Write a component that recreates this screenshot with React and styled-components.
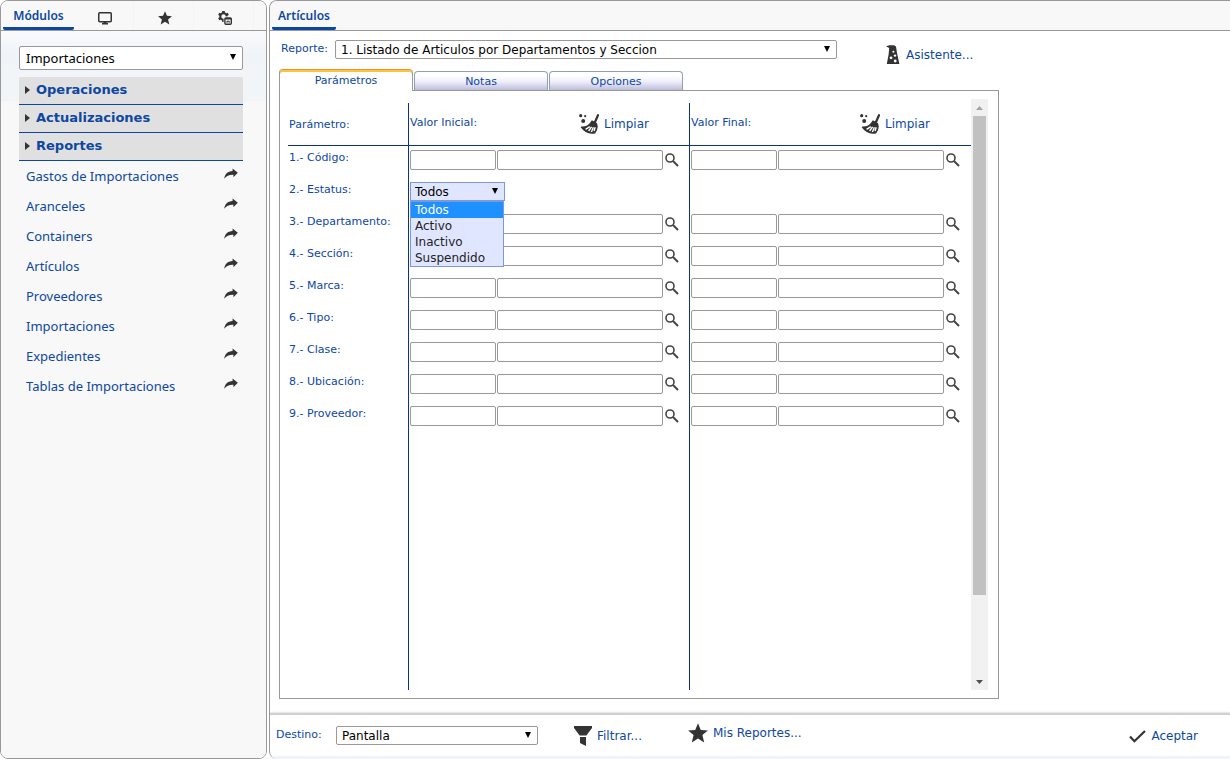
import React, {useState} from 'react'
import styled, {createGlobalStyle} from 'styled-components'

const blue = '#0d47a1'
const line = '#0a318c'
const grey = '#999999'
const verdana = '"DejaVu Sans", Verdana, sans-serif'
const lucida = '"Noto Sans", "Lucida Sans", sans-serif'

const modules = [
    'Gastos de Importaciones',
    'Aranceles',
    'Containers',
    'Artículos',
    'Proveedores',
    'Importaciones',
    'Expedientes',
    'Tablas de Importaciones',
]

const sections = ['Operaciones', 'Actualizaciones', 'Reportes']

const parameters = [
    'Código',
    'Estatus',
    'Departamento',
    'Sección',
    'Marca',
    'Tipo',
    'Clase',
    'Ubicación',
    'Proveedor',
]

const statuses = ['Todos', 'Activo', 'Inactivo', 'Suspendido']

const App = () => {
    return (
        <Page>
            <GlobalStyle/>
            <Sidebar/>
            <Report/>
        </Page>
    )
}

export default App

const Sidebar = () => {
    return (
        <SidePanel>
            <TabBar>
                <ModuleTab>Módulos</ModuleTab>
                <IconTab aria-label="Escritorio"><MonitorIcon/></IconTab>
                <IconTab aria-label="Favoritos"><StarIcon size={14}/></IconTab>
                <IconTab aria-label="Configuración"><GearsIcon/></IconTab>
            </TabBar>
            <SideBody>
                <Dropdown label="Módulo" options={['Importaciones']} tall/>
                <Sections>
                    {sections.map(name => (
                        <Section key={name}>
                            <Caret width="5" height="8" viewBox="0 0 5 8"><path d="M0 0L5 4L0 8Z"/></Caret>
                            {name}
                        </Section>
                    ))}
                </Sections>
                <nav>
                    {modules.map(name => (
                        <ModuleLink key={name} href="#">
                            {name}
                            <ShareIcon/>
                        </ModuleLink>
                    ))}
                </nav>
            </SideBody>
        </SidePanel>
    )
}

const Report = () => {
    return (
        <MainPanel>
            <TabBar>
                <ReportTab>Artículos</ReportTab>
            </TabBar>
            <ReportBody>
                <ReportLine>
                    <Label htmlFor="reporte">Reporte:</Label>
                    <ReportSelect>
                        <Dropdown id="reporte" options={['1. Listado de Articulos por Departamentos y Seccion']}/>
                    </ReportSelect>
                    <Action><HatIcon/>Asistente...</Action>
                </ReportLine>
                <Tabs>
                    <Tab $active>Parámetros</Tab>
                    <Tab>Notas</Tab>
                    <Tab>Opciones</Tab>
                </Tabs>
                <TabPanel>
                    <Params>
                        <ParamHeader>
                            <HeadName>Parámetro:</HeadName>
                            <ValueHeader title="Valor Inicial:"/>
                            <ValueHeader title="Valor Final:"/>
                        </ParamHeader>
                        {parameters.map((name, i) => (
                            <ParamRow key={name}>
                                <ParamName>{i + 1}.- {name}:</ParamName>
                                {name === 'Estatus' ? (
                                    <>
                                        <ValueCell><StatusSelect/></ValueCell>
                                        <ValueCell/>
                                    </>
                                ) : (
                                    <>
                                        <RangeValue name={name + ' inicial'}/>
                                        <RangeValue name={name + ' final'}/>
                                    </>
                                )}
                            </ParamRow>
                        ))}
                        <Filler>
                            <span/>
                            <ValueCell/>
                            <ValueCell/>
                        </Filler>
                    </Params>
                    <ScrollBar>
                        <ScrollEnd $color="#a3a3a3"><svg width="7" height="4" viewBox="0 0 7 4"><path d="M0 4L3.5 0L7 4Z"/></svg></ScrollEnd>
                        <Track><Thumb/></Track>
                        <ScrollEnd $color="#505050"><svg width="7" height="4" viewBox="0 0 7 4"><path d="M0 0L3.5 4L7 0Z"/></svg></ScrollEnd>
                    </ScrollBar>
                </TabPanel>
            </ReportBody>
            <Footer>
                <FooterLabel htmlFor="destino">Destino:</FooterLabel>
                <DestinationSelect>
                    <Dropdown id="destino" options={['Pantalla']}/>
                </DestinationSelect>
                <FilterAction><FunnelIcon/>Filtrar...</FilterAction>
                <Action><StarIcon size={20}/>Mis Reportes...</Action>
                <AcceptAction><CheckIcon/>Aceptar</AcceptAction>
            </Footer>
            <BottomStrip/>
        </MainPanel>
    )
}

const Dropdown = ({id, label, options, tall}) => {
    return (
        <SelectBox>
            <Select id={id} aria-label={label} $tall={tall}>
                {options.map(option => <option key={option}>{option}</option>)}
            </Select>
            <Arrow/>
        </SelectBox>
    )
}

const StatusSelect = () => {
    const [value, setValue] = useState('Todos')

    return (
        <StatusBox>
            <SelectBox>
                <Select $focused aria-label="Estatus" value={value} onChange={e => setValue(e.target.value)}>
                    {statuses.map(status => <option key={status}>{status}</option>)}
                </Select>
                <Arrow/>
            </SelectBox>
            <StatusMenu role="listbox" aria-label="Opciones de estatus">
                {statuses.map(status => (
                    <StatusOption
                        key={status}
                        role="option"
                        aria-selected={status === value}
                        $selected={status === value}
                        onClick={() => setValue(status)}
                    >
                        {status}
                    </StatusOption>
                ))}
            </StatusMenu>
        </StatusBox>
    )
}

const ValueHeader = ({title}) => {
    return (
        <HeadCell>
            <HeadTitle>{title}</HeadTitle>
            <Action><BroomIcon/>Limpiar</Action>
        </HeadCell>
    )
}

const RangeValue = ({name}) => {
    return (
        <ValueCell>
            <CodeInput aria-label={name}/>
            <NameInput aria-label={name + ', descripción'}/>
            <SearchButton aria-label={'Buscar ' + name}><SearchIcon/></SearchButton>
        </ValueCell>
    )
}

const Arrow = () => (
    <ArrowSvg width="6" height="6" viewBox="0 0 6 6"><path d="M0 0H6L3 6Z"/></ArrowSvg>
)

const MonitorIcon = () => (
    <svg width="14" height="13" viewBox="0 0 14 13">
        <rect x="0.75" y="0.75" width="12.5" height="9" rx="1" fill="none" stroke="#333" strokeWidth="1.5"/>
        <path d="M5.5 9.5H8.5V11H10V12.5H4V11H5.5Z" fill="#333"/>
    </svg>
)

const StarIcon = ({size}) => (
    <svg width={size} height={size} viewBox="0 0 20 20">
        <path d="M10 0.2L12.8 6.9L19.9 7.4L14.4 12L16.2 19.4L10 15.4L3.8 19.4L5.6 12L0.1 7.4L7.2 6.9Z" fill="#333"/>
    </svg>
)

const GearsIcon = () => (
    <svg width="14" height="14" viewBox="0 0 14 14">
        <circle cx="5.5" cy="5.5" r="3.2" fill="none" stroke="#333" strokeWidth="2"/>
        <path
            d="M5.5 0V2M5.5 9V11M0.7 2.8L2.4 3.7M0.7 8.2L2.4 7.3M10.3 2.8L8.6 3.7"
            stroke="#333"
            strokeWidth="2.6"
        />
        <rect x="5.6" y="5.4" width="8.4" height="8.6" fill="#f8f8f8"/>
        <rect x="6.9" y="6.9" width="6.4" height="6.4" rx="1" fill="none" stroke="#333" strokeWidth="1.4"/>
        <path d="M7 7.8H13.2" stroke="#333" strokeWidth="1.4"/>
        <path d="M9 11.8V10.2H11.2V11.8" fill="none" stroke="#333"/>
    </svg>
)

const ShareIcon = () => (
    <svg width="14" height="12" viewBox="0 0 14 12">
        <path d="M0.2 10.8C0.8 6.2 3.6 3.2 8.6 3V0.4L13.8 4.8L9.4 9.2V6.8C5.4 6.6 2.4 8 0.2 10.8Z" fill="#333"/>
    </svg>
)

const HatIcon = () => (
    <svg width="14" height="20" viewBox="0 0 14 20">
        <path d="M0 1.2L3.4 0.2H8L10 1.6L11 8L13.4 19H0.8L2.6 9.4L3.2 3Z" fill="#333"/>
        <circle cx="7.4" cy="6.8" r="1" fill="#fff"/>
        <circle cx="9" cy="10.6" r="1.2" fill="#fff"/>
        <circle cx="5" cy="12.8" r="1.4" fill="#fff"/>
        <circle cx="9.2" cy="16" r="1.4" fill="#fff"/>
    </svg>
)

const BroomIcon = () => (
    <svg width="20" height="20" viewBox="0 0 20 20">
        <circle cx="1.7" cy="1.7" r="1.6" fill="#333"/>
        <circle cx="6.2" cy="2.2" r="1.1" fill="#333"/>
        <circle cx="4.2" cy="7" r="2" fill="#333"/>
        <path d="M19 1.2L16 8" stroke="#333" strokeWidth="2.2" strokeLinecap="round"/>
        <path
            d="M13 7L17.4 9.6Q19.4 14 15.8 18.8Q7.4 20.4 2.4 13.2Q9.4 13.6 13 7Z"
            fill="#333"
            stroke="#333"
            strokeWidth="1.2"
            strokeLinejoin="round"
        />
        <path
            d="M6.6 15.4L10.8 12.6M9.6 17L12.6 12.8M12.4 18L14.4 13.2M15 17L16.2 13.2"
            stroke="#fff"
            strokeWidth="1.4"
        />
    </svg>
)

const SearchIcon = () => (
    <svg width="14" height="14" viewBox="0 0 14 14">
        <circle cx="5" cy="5" r="4" fill="none" stroke="#444" strokeWidth="1.6"/>
        <path d="M8 8L13 13" stroke="#444" strokeWidth="2"/>
    </svg>
)

const FunnelIcon = () => (
    <svg width="18" height="20" viewBox="0 0 18 20">
        <path d="M0 0H18V2L12.4 9.6H5.6L0 2Z" fill="#333"/>
        <path d="M6 11H12V20L6 17Z" fill="#333"/>
    </svg>
)

const CheckIcon = () => (
    <svg width="17" height="13" viewBox="0 0 17 13">
        <path d="M1 6.6L5.4 11.2L16 1" fill="none" stroke="#333" strokeWidth="2.2"/>
    </svg>
)

const GlobalStyle = createGlobalStyle`
    * {
        box-sizing: border-box;
    }

    body {
        margin: 0;
        background-color: #fff;
    }

    button {
        border: 0;
        padding: 0;
        background: none;
        cursor: pointer;
    }

    svg {
        display: block;
        flex: none;
    }
`

const Page = styled.div`
    display: flex;
    gap: 2px;
    min-height: 100vh;
    font-family: ${verdana};
    font-size: 11px;
    color: ${blue};
    overflow: hidden;
`

const SidePanel = styled.aside`
    display: flex;
    flex-direction: column;
    flex: none;
    width: 267px;
    border: 1px solid ${grey};
    border-radius: 8px;
    overflow: hidden;
`

const MainPanel = styled.main`
    display: flex;
    flex-direction: column;
    flex: 1;
    min-width: 740px;
    border: solid ${grey};
    border-width: 1px 0 0 1px;
    border-radius: 8px 0 0 8px;
    overflow: hidden;
`

const TabBar = styled.div`
    display: flex;
    flex: none;
    height: 30px;
    padding-left: 2px;
    background-color: #f8f8f8;
    border-bottom: 1px solid ${grey};
`

const ModuleTab = styled.button`
    width: 71px;
    height: 29px;
    padding-top: 2px;
    border-bottom: 3px solid ${blue};
    border-radius: 2px;
    font-family: ${lucida};
    font-size: 12px;
    font-weight: 600;
    color: ${blue};
`

const ReportTab = styled(ModuleTab)`
    width: 64px;
`

const IconTab = styled.button`
    display: flex;
    align-items: center;
    justify-content: center;
    width: 60px;
    padding: 5px 0 0 2px;
    border-right: 1px solid #f4f4f4;
`

const SideBody = styled.div`
    flex: 1;
    padding: 15px 23px 0 18px;
    background: linear-gradient(#fafafb, #f0f4f8 22px, #f2f5f8 70px, #f8f8f8 70px);
`

const SelectBox = styled.div`
    display: grid;
    align-items: center;
`

const Select = styled.select`
    grid-area: 1 / 1;
    width: 100%;
    height: ${props => props.$tall ? 24 : 19}px;
    padding: 0 20px 0 ${props => props.$tall ? 6 : props.$focused ? 4 : 5}px;
    appearance: none;
    border: 1px solid ${props => props.$focused ? '#7b9ade' : grey};
    border-radius: ${props => props.$focused ? 0 : 2}px;
    outline: none;
    background-color: ${props => props.$focused ? '#e0e6ff' : '#fff'};
    font-family: ${props => props.$tall ? lucida : verdana};
    font-size: ${props => props.$tall ? 13 : 12}px;
    color: #000;
`

const ArrowSvg = styled.svg`
    grid-area: 1 / 1;
    justify-self: end;
    margin: 0 7px 2px 0;
    pointer-events: none;
`

const Sections = styled.div`
    margin-top: 7px;
    border-radius: 2px 2px 0 0;
    overflow: hidden;
`

const Section = styled.button`
    display: flex;
    align-items: center;
    gap: 6px;
    width: 100%;
    height: 28px;
    padding: 0 6px 2px;
    background-color: #e0e0e0;
    border-bottom: 1px solid ${blue};
    font-family: ${verdana};
    font-size: 13px;
    font-weight: bold;
    color: ${blue};
`

const Caret = styled.svg`
    fill: #333;
`

const ModuleLink = styled.a`
    display: flex;
    align-items: center;
    justify-content: space-between;
    height: 30px;
    padding: 0 5px 0 7px;
    font-family: ${lucida};
    font-size: 13px;
    color: ${blue};
    text-decoration: none;

    svg {
        margin-bottom: 4px;
    }
`

const ReportBody = styled.div`
    display: flex;
    flex-direction: column;
    flex: 1;
    padding: 9px 0 14px 9px;
`

const ReportLine = styled.div`
    display: flex;
    height: 29px;
    padding-left: 2px;
`

const Label = styled.label`
    flex: none;
    width: 54px;
    line-height: 18px;
`

const FooterLabel = styled(Label)`
    line-height: 24px;
`

const ReportSelect = styled.div`
    width: 502px;
    margin-right: 49px;
`

const DestinationSelect = styled.div`
    width: 202px;
    margin: 3px 36px 0 6px;
`

const Action = styled.button`
    display: flex;
    align-items: center;
    gap: 5px;
    height: 20px;
    font-family: ${verdana};
    font-size: 12px;
    color: ${blue};

    ${ReportLine} & {
        margin-top: 5px;
        gap: 6px;
    }
`

const FilterAction = styled(Action)`
    width: 114px;
    margin-top: 3px;
`

const AcceptAction = styled(Action)`
    margin: 3px 32px 0 auto;
`

const Tabs = styled.div`
    display: flex;
    align-items: flex-end;
    gap: 1px;
    height: 21px;
    z-index: 1;
`

const Tab = styled.button`
    width: 134px;
    height: ${props => props.$active ? 22 : 19}px;
    margin-bottom: ${props => props.$active ? -1 : 0}px;
    border: 1px solid ${props => props.$active ? grey : '#8fa0ae'};
    border-top-color: ${props => props.$active ? '#e8952f' : '#8fa0ae'};
    border-bottom: 0;
    border-radius: 4px 4px 0 0;
    box-shadow: ${props => props.$active ? 'inset 0 2px #ffc23f' : 'none'};
    background: ${props => props.$active ? '#fff' : 'linear-gradient(#fff 20%, #eeeefa 55%, #bdbddc)'};
    font-family: ${verdana};
    font-size: 11px;
    color: ${blue};
`

const TabPanel = styled.div`
    display: flex;
    flex: 1;
    width: 720px;
    padding: 8px 10px 8px 8px;
    border: 1px solid ${grey};
`

const Params = styled.div`
    display: flex;
    flex-direction: column;
    flex: 1;
    padding-top: 4px;
`

const ParamRow = styled.div`
    display: grid;
    grid-template-columns: 120px 281px 1fr;
    height: 32px;
`

const ParamHeader = styled(ParamRow)`
    height: 43px;
    border-bottom: 1px solid ${line};
`

const Filler = styled(ParamRow)`
    flex: 1;
`

const ParamName = styled.div`
    padding: 4px 1px 0;
    line-height: 16px;
    white-space: nowrap;
`

const HeadName = styled(ParamName)`
    padding-top: 14px;
`

const ValueCell = styled.div`
    display: flex;
    align-items: flex-start;
    gap: 1px;
    padding: 4px 0 0 1px;
    border-left: 1px solid ${line};
`

const HeadCell = styled(ValueCell)`
    gap: 0;
    padding-top: 11px;
`

const HeadTitle = styled.span`
    width: 169px;
    line-height: 18px;
`

const CodeInput = styled.input`
    width: 86px;
    height: 20px;
    border: 1px solid ${grey};
    border-radius: 2px;
    outline: none;
`

const NameInput = styled(CodeInput)`
    width: 166px;
`

const SearchButton = styled.button`
    padding: 3px 1px;
`

const StatusBox = styled.div`
    position: relative;
    width: 95px;
`

const StatusMenu = styled.ul`
    position: absolute;
    top: 100%;
    left: 0;
    width: 94px;
    margin: 0;
    padding: 0;
    border: 1px solid #7b9ade;
    background-color: #e0e6ff;
    list-style: none;
    font-family: ${verdana};
    font-size: 12px;
`

const StatusOption = styled.li`
    height: 16px;
    padding-left: 4px;
    line-height: 16px;
    background-color: ${props => props.$selected ? '#1e90ff' : 'transparent'};
    color: ${props => props.$selected ? '#fff' : '#222'};
`

const ScrollBar = styled.div`
    display: flex;
    flex-direction: column;
    width: 17px;
    background-color: #f1f1f1;
`

const ScrollEnd = styled.div`
    display: flex;
    align-items: center;
    justify-content: center;
    height: 17px;
    fill: ${props => props.$color};
`

const Track = styled.div`
    flex: 1;
    padding: 0 2px;
`

const Thumb = styled.div`
    height: 86%;
    background-color: #c1c1c1;
`

const Footer = styled.footer`
    display: flex;
    align-items: flex-start;
    height: 43px;
    padding: 8px 0 0 6px;
    border-top: 2px solid #d0d0d0;
    box-shadow: 0 -1px 1px #e8e8e8;
`

const BottomStrip = styled.div`
    height: 3px;
    background-color: #f0f4f8;
`
